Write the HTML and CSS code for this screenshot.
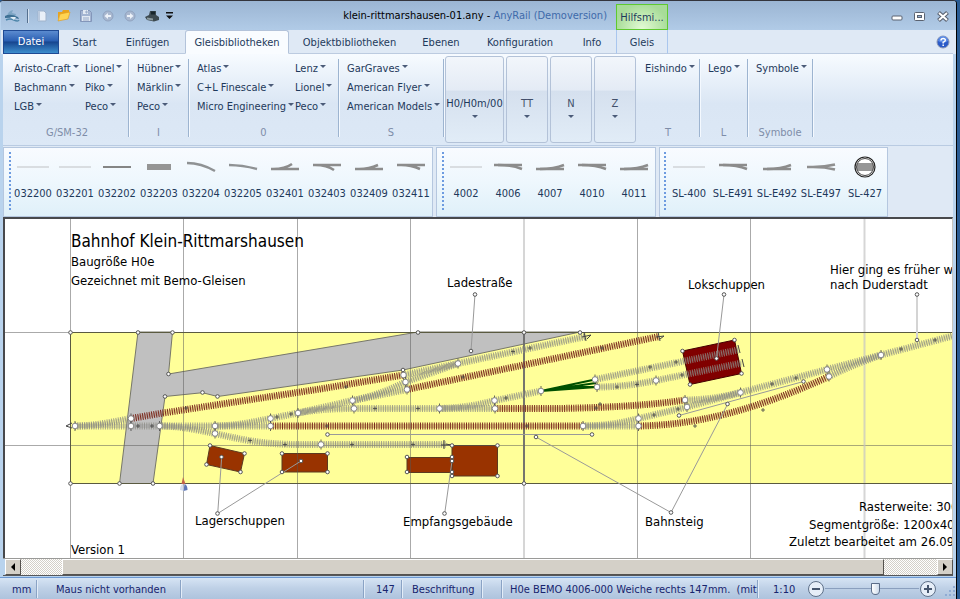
FILE: index.html
```html
<!DOCTYPE html>
<html lang="de">
<head>
<meta charset="utf-8">
<title>klein-rittmarshausen-01.any - AnyRail</title>
<link rel="stylesheet" href="styles.css">
</head>
<body>
<div class="window">
  <header class="head">
    <div class="caption">
      <svg class="logo" width="16" height="16" viewBox="0 0 16 16"><path d="M3 8Q4 3 9 2l-1 3 4 1-1 3z" fill="#7fa6c4"/><path d="M1 8q5-3 13 1l1 2q-6-2-14-1z" fill="#3f7195"/><path d="M2 12q4-2 8 0t5 0" fill="none" stroke="#4e86aa" stroke-width="1.5"/><path d="M6 9h6l-2 3z" fill="#e3eef5"/></svg>
      <span class="qsep"></span>
      <button class="q" aria-label="Neu"><svg width="16" height="16" viewBox="0 0 16 16"><path d="M4 3h6l2 2v8H4z" fill="#e9f0f8" stroke="#9fb3cc"/><path d="M4 3h2v10H4z" fill="#b9c9de"/></svg></button>
      <button class="q" aria-label="Öffnen"><svg width="16" height="16" viewBox="0 0 16 16"><path d="M2 4h4l1-2h6v4H4l-2 6z" fill="#e8a41d"/><path d="M2 13 4 6l10-2-2 7z" fill="#ffd452" stroke="#e0981a" stroke-width=".6"/></svg></button>
      <button class="q" aria-label="Speichern"><svg width="16" height="16" viewBox="0 0 16 16"><path d="M2.500 2.500h9l2 2v9h-11z" fill="#a3b4d2" stroke="#8396ba"/><path d="M5 2h5v4H5zM4 8h8v5H4z" fill="#e2e9f3"/><path d="M8 3h1v2H8zM5 10h6M5 12h6" stroke="#97a9c8" fill="none"/></svg></button>
      <button class="q" aria-label="Rückgängig"><svg width="16" height="16" viewBox="0 0 16 16"><circle cx="8" cy="8" r="5" fill="#a9b8d0" stroke="#90a3c0"/><path d="M4.500 8 8 5v2h3v2H8v2z" fill="#edf2f9"/></svg></button>
      <button class="q" aria-label="Wiederholen"><svg width="16" height="16" viewBox="0 0 16 16"><circle cx="8" cy="8" r="5" fill="#a9b8d0" stroke="#90a3c0"/><path d="M11.500 8 8 5v2H5v2h3v2z" fill="#edf2f9"/></svg></button>
      <button class="q" aria-label="Drucken"><svg width="16" height="16" viewBox="0 0 16 16"><path d="M1 9l4-2 1-4 6 0 0 4 3 2v3l-5 1.500-7-1.500z" fill="#3d4a50"/><path d="M7 3.500h4v3H7z" fill="#18262c"/><path d="M3 9.500l6 1v2l-6-1z" fill="#8c9ba0"/></svg></button>
      <button class="q more" aria-label="Anpassen"><svg width="9" height="8" viewBox="0 0 9 8"><path d="M1 0h7v1.500H1zM1 3.500h7L4.500 7z" fill="#111"/></svg></button>
      <h1 class="title">klein-rittmarshausen-01.any - <span>AnyRail (Demoversion)</span></h1>
    </div>
    <div class="context">Hilfsmi...</div>
    <div class="winbtns">
      <button aria-label="Minimieren"><svg width="14" height="14" viewBox="0 0 14 14"><rect x="2" y="7" width="10" height="4" rx="1" fill="#fff" stroke="#5a6270"/></svg></button>
      <button aria-label="Maximieren"><svg width="14" height="14" viewBox="0 0 14 14"><rect x="1.500" y="3.500" width="10" height="8" rx="1" fill="#fff" stroke="#5a6270"/><rect x="4.500" y="6.500" width="4" height="2" fill="#9bb5d6" stroke="#5a6270"/></svg></button>
      <button aria-label="Schließen"><svg width="14" height="14" viewBox="0 0 14 14"><path d="M2.500 3.500l9 8M11.500 3.500l-9 8" stroke="#5a6270" stroke-width="4.200"/><path d="M3 4l8 7M11 4l-8 7" stroke="#fff" stroke-width="2"/></svg></button>
    </div>
    <nav class="tabs">
      <button class="file">Datei</button>
      <button>Start</button>
      <button>Einfügen</button>
      <button class="active">Gleisbibliotheken</button>
      <button>Objektbibliotheken</button>
      <button>Ebenen</button>
      <button>Konfiguration</button>
      <button>Info</button>
    </nav>
    <button class="ctab">Gleis</button>
    <div class="helpcell"><button aria-label="Hilfe"><svg width="14" height="14" viewBox="0 0 14 14"><circle cx="7" cy="7" r="6" fill="#2b5bc8" stroke="#8b97b4"/><path d="M2 6a5 5 0 0 1 10 0q-5 3-10 0" fill="#6e9cf0" opacity=".7"/><path d="M5 5.500q0-2 2.200-2T9.300 5.300Q9.300 6.600 7.200 7.200v1.300M7.200 9.500v1.500" fill="none" stroke="#fff" stroke-width="1.500"/></svg></button></div>
  </header>

  <section class="ribbon">
    <div class="group g1"><div class="cols"><div><button>Aristo-Craft</button><button>Bachmann</button><button>LGB</button></div><div><button>Lionel</button><button>Piko</button><button>Peco</button></div></div><h2>G/SM-32</h2></div>
    <div class="group g2"><div class="cols"><div><button>Hübner</button><button>Märklin</button><button>Peco</button></div></div><h2>I</h2></div>
    <div class="group g3"><div class="cols"><div><button>Atlas</button><button>C+L Finescale</button><button>Micro Engineering</button></div><div><button>Lenz</button><button>Lionel</button><button>Peco</button></div></div><h2>0</h2></div>
    <div class="group g4"><div class="cols"><div><button>GarGraves</button><button>American Flyer</button><button>American Models</button></div></div><h2>S</h2></div>
    <div class="bigs"><button class="wide">H0/H0m/00</button><button>TT</button><button>N</button><button>Z</button></div>
    <div class="group g5"><div class="cols"><div><button>Eishindo</button></div></div><h2>T</h2></div>
    <div class="group g6"><div class="cols"><div><button>Lego</button></div></div><h2>L</h2></div>
    <div class="group g7"><div class="cols"><div><button>Symbole</button></div></div><h2>Symbole</h2></div>
  </section>

  <svg class="defs" width="0" height="0">
    <defs>
      <g id="st"><path d="M4 12h32" stroke="#d9dde1" stroke-width="2"/></g>
      <g id="tr" fill="none" stroke="#8c8c8c" stroke-width="2.500"><path d="M6 10h28"/><path d="M10 10q14 0 24 4"/></g>
      <g id="tl" fill="none" stroke="#8c8c8c" stroke-width="2.500"><path d="M6 14h28"/><path d="M10 14q14 0 24-4"/></g>
    </defs>
  </svg>
  <section class="bars">
    <div class="bar"><i class="grip"></i>
      <button><svg><use href="#st"/></svg>032200</button>
      <button><svg><use href="#st"/></svg>032201</button>
      <button><svg><path d="M6 12h28" stroke="#858585" stroke-width="2"/></svg>032202</button>
      <button><svg><path d="M8 12h24" stroke="#959595" stroke-width="6"/></svg>032203</button>
      <button><svg><path d="M6 8q14 0 28 8" fill="none" stroke="#8f9294" stroke-width="2.500"/></svg>032204</button>
      <button><svg><path d="M6 10q14 0 28 4" fill="none" stroke="#8f9294" stroke-width="2.500"/></svg>032205</button>
      <button><svg><path d="M6 14h28M8 14q12 0 19-5" fill="none" stroke="#8c8c8c" stroke-width="2.500"/></svg>032401</button>
      <button><svg><path d="M6 10h28M8 10q12 0 19 5" fill="none" stroke="#8c8c8c" stroke-width="2.500"/></svg>032403</button>
      <button><svg><path d="M6 14h28M10 14q10 0 19-4" fill="none" stroke="#8c8c8c" stroke-width="2.500"/></svg>032409</button>
      <button><svg><path d="M6 10h28M10 10q10 0 19 4" fill="none" stroke="#8c8c8c" stroke-width="2.500"/></svg>032411</button>
    </div>
    <div class="bar"><i class="grip"></i>
      <button><svg><use href="#st"/></svg>4002</button>
      <button><svg><use href="#tr"/></svg>4006</button>
      <button><svg><use href="#tl"/></svg>4007</button>
      <button><svg><use href="#tr"/></svg>4010</button>
      <button><svg><use href="#tl"/></svg>4011</button>
    </div>
    <div class="bar roomy"><i class="grip"></i>
      <button><svg><use href="#st"/></svg>SL-400</button>
      <button><svg><use href="#tr"/></svg>SL-E491</button>
      <button><svg><use href="#tl"/></svg>SL-E492</button>
      <button><svg><path d="M6 12h14M12 12q12 0 22-2.500M12 12q12 0 22 2.500" fill="none" stroke="#8f8f8f" stroke-width="2.500"/></svg>SL-E497</button>
      <button><svg><circle cx="20" cy="12" r="10" fill="#fff" stroke="#222" stroke-width="1.200"/><path d="M12 12h16" stroke="#969696" stroke-width="8"/><circle cx="20" cy="12" r="8.500" fill="none" stroke="#444"/></svg>SL-427</button>
    </div>
  </section>

  <main class="plan">
    <svg width="100%" height="100%" role="img" aria-label="Gleisplan Bahnhof Klein-Rittmarshausen">
      <g transform="translate(-5 -219)">
        <rect x="70" y="332" width="2000" height="151" fill="#ffff99"/>
        <path class="road" d="M138 332H172.500L168.500 374 418 332H580L403 370 217.700 396.500 202.500 392.700 165 396.500 153 483.500H119.500Z"/>
        <path class="house" d="M210 445.500 244.500 453.500 240.500 472 206.500 464.500ZM282 453.500H327.500V472H282ZM407 457.500H452V472.500H407ZM452 445.500H497.500V476H452Z"/>
        <path class="shed" d="M682.500 351 734.500 340 741.500 373.500 690 384.500Z"/>
        <path class="grid" d="M70.500 219V560M183.500 219V560M297.500 219V560M410.500 219V560M637.500 219V560M750.500 219V560M5 332.500H2000M5 445.500H2000"/>
        <path class="gridw" d="M524 219V560M864.500 219V560"/>
        <path class="edge" d="M70.500 332.500H2000M70.500 483.500H2000M70.500 332V483"/>
        <path d="M524 332V483" stroke="#555" stroke-width="1.500"/>

        <g id="tracks"></g>
        <g class="green"><path d="M541 391 595 379.500M541 391 597 387M560 387 597 387M541 391 596 383"/></g>

        <path class="call" d="M475 294 471 351M724 294.500 716.500 358.500M217.700 513.500 221.700 457M217.700 513.500 301 461M444.700 513.500 452 461M671 512.500 536 437M671 512.500 727.700 404M327.500 434.500H592M679 415.500 803.500 381.500"/>
        <path d="M917 294V340" stroke="#d4d4d4" stroke-width="2"/>
        <path d="M72 423l-6 3 6 2M584 332l2 9M582 337l9-2-4 4M658 332l2 9M656 337l8-1-4 3M738 345l2 8M742 359l2 8M444 440v9M441 445h10l-5-1" class="buffer"/>
        <g id="nodes"></g>
        <path d="M183 477l-1.500 7h4z" fill="#c2644a"/><path d="M180 490q0-5 3-6l1 7z" fill="#d5dcec"/><path d="M187.500 490q0-5-3-6l-1 7z" fill="#5f78b8"/>

        <g class="txt">
          <text class="big" x="71" y="247">Bahnhof Klein-Rittmarshausen</text>
          <text x="71" y="266">Baugröße H0e</text>
          <text x="71" y="285">Gezeichnet mit Bemo-Gleisen</text>
          <text x="447" y="287">Ladestraße</text>
          <text x="688" y="289">Lokschuppen</text>
          <text x="830" y="274">Hier ging es früher we</text>
          <text x="830" y="289">nach Duderstadt</text>
          <text x="195" y="525">Lagerschuppen</text>
          <text x="403" y="526">Empfangsgebäude</text>
          <text x="645" y="526">Bahnsteig</text>
          <text x="71" y="554">Version 1</text>
          <text x="859" y="511">Rasterweite: 300</text>
          <text x="809" y="529">Segmentgröße: 1200x400</text>
          <text x="789" y="546">Zuletzt bearbeitet am 26.09.2</text>
        </g>
      </g>
    </svg>
  </main>
  <div class="scroll"><button aria-label="Links"><svg width="8" height="8"><path d="M6 0v8L2 4z"/></svg></button><div class="track"><div class="thumb"></div></div><button aria-label="Rechts"><svg width="8" height="8"><path d="M2 0v8l4-4z"/></svg></button></div>

  <footer class="status">
    <span class="s-unit">mm</span>
    <span class="s-mouse">Maus nicht vorhanden</span>
    <span class="s-fill"></span>
    <span class="s-num">147</span>
    <span class="s-kind">Beschriftung</span>
    <span class="s-gap"></span>
    <span class="s-desc">H0e BEMO 4006-000 Weiche rechts 147mm.&nbsp; (mit A</span>
    <label class="s-zoom" for="zoom">1:10</label>
    <button aria-label="Verkleinern"><svg width="18" height="18"><circle cx="9" cy="9" r="7.500"/><path d="M5 9h8"/></svg></button>
    <input id="zoom" type="range" min="0" max="100" value="54">
    <button aria-label="Vergrößern"><svg width="18" height="18"><circle cx="9" cy="9" r="7.500"/><path d="M5 9h8M9 5v8"/></svg></button>
    <svg class="sizer" width="12" height="12"><path d="M9 1h2v2H9zM5 5h2v2H5zM9 5h2v2H9zM1 9h2v2H1zM5 9h2v2H5zM9 9h2v2H9z"/></svg>
  </footer>
</div>
<script src="plan.js"></script>
</body>
</html>
```
FILE: plan.js
```js
const NS = 'http://www.w3.org/2000/svg';

const flex = [
  'M131 418.500L160 413.500L320 389L403.500 375',
  'M407 389.500L659 336.500',
  'M495 408.500H560Q640 407 685 400',
  'M270.500 426H583',
  'M638.500 426C700 425 760 408 829 376.500'
];
const plain = [
  'M75 426H270.500',
  'M75 426C95 426 112 422 131 418.500',
  'M159.500 426C180 426 198 430 215 433.500C240 439 260 444.500 300 444.500H446',
  'M215 426C235 426 253 422 270.500 418.500L298 413L352.500 400.500',
  'M298 413Q320 408.500 354 408.500H495',
  'M352.500 400.500Q380 395 405.500 382L458 363.500',
  'M352.500 400.500L407 389.500',
  'M403.500 375L458 363.500L586 336.500',
  'M439.500 408.500Q468 408 495 400.500L541 391',
  'M595 379.500L738 350',
  'M597 387Q625 387 656 380.500L742 363',
  'M583 426H638.500',
  'M583 426Q611 426 638.500 418.500L687 407L740.500 392.500',
  'M685 400Q712 400 740.500 392.500L827 369.500L881 355L960 334',
  'M829 376.500Q850 366 881 355'
];
const joints = [
  [75, 426], [131, 418.5], [131, 426], [159.5, 426], [215, 426], [215, 433.5], [270.5, 418.5], [270.5, 426],
  [298, 413], [352.5, 400.5], [354, 408.5], [403.5, 375], [405.5, 382], [407, 389.5], [458, 363.5], [439.5, 408.5],
  [494.5, 400.5], [495, 408.5], [541, 391], [595, 379.5], [597, 387], [583, 426], [638.5, 418.5], [638.5, 426],
  [656, 380.5], [685, 400], [687, 407], [740.5, 392.5], [827, 369.5], [829, 376.5], [881, 355], [321, 444.5]
];
const handles = [
  [70.5, 332.5], [138, 332.5], [172.5, 332.5], [168.5, 374], [165, 396.5], [202.5, 392.5], [217.5, 396.5],
  [70.5, 483.5], [119.5, 483.5], [153, 483.5], [418, 332.5], [580, 332.5], [403, 370], [524, 332.5], [524, 483.5],
  [210, 445.5], [244.5, 453.5], [240.5, 472], [206.5, 464.5], [282, 453.5], [327.5, 453.5], [282, 472], [327.5, 472],
  [407, 457], [407, 472], [452, 445.5], [452, 457], [452, 461], [452, 472], [452, 476], [497.5, 445.5], [497.5, 476],
  [682.5, 351], [734.5, 340], [741.5, 373.5], [690, 384.5], [475, 294.5], [471, 351], [724, 294.5], [716.5, 358.5],
  [917, 294.5], [917, 340], [217.5, 513.5], [221.5, 457], [301, 461], [444.5, 513.5], [671, 512.5], [536, 437],
  [727.5, 404], [327.5, 434.5], [592, 434.5], [679, 415.5], [803.5, 381.5]
];
const marks = [
  [138, 426], [152, 426], [186, 408], [250, 440.5], [285, 444.5], [277, 417], [291, 414], [346, 387], [375, 408.5],
  [418, 408.5], [352, 444.5], [413, 444.5], [463, 377], [513, 351.5], [530, 348], [506, 398], [602, 348], [527, 426],
  [327, 426], [617, 387], [637, 384.5], [650, 367], [676, 362], [682, 375], [654, 415], [678, 409], [596, 408],
  [600, 404], [772, 384], [796, 378], [901, 349], [935, 340], [763, 410], [695, 426]
];

function add(parent, tag, attrs) {
  const el = document.createElementNS(NS, tag);
  for (const k in attrs) el.setAttribute(k, attrs[k]);
  parent.appendChild(el);
}
const tracks = document.getElementById('tracks');
const nodes = document.getElementById('nodes');

for (const [list, name] of [[plain, 'plain'], [flex, 'flex']]) {
  for (const d of list) {
    add(tracks, 'path', { d, class: 'ties ' + name });
    add(tracks, 'path', { d, class: 'rails ' + name });
  }
}
for (const [x, y] of marks) add(nodes, 'path', { d: `M${x - 2} ${y}h4M${x} ${y - 2}v4`, class: 'mark' });
for (const [x, y] of joints) {
  add(nodes, 'path', { d: `M${x} ${y - 5}v10`, class: 'mark' });
  add(nodes, 'circle', { cx: x, cy: y, r: 2.8, class: 'joint' });
}
for (const [x, y] of handles) add(nodes, 'circle', { cx: x, cy: y, r: 1.8, class: 'handle' });
```
FILE: styles.css
```css
*, ::after { box-sizing: border-box; }
html, body { height: 100%; }
body {
  margin: 0;
  background: #2a5c94;
  font: 11px/14px "DejaVu Sans Condensed", "DejaVu Sans", sans-serif;
  color: #1e395b;
  overflow: hidden;
}
button {
  font: inherit; color: inherit; background: none; border: 0; padding: 0; margin: 0;
  white-space: nowrap;
}
.window {
  display: flex; flex-direction: column;
  height: 100%;
  margin-right: 3px;
  border-top: 1px solid #33343c;
  border-right: 1px solid #000;
  background: #b9d3ed;
  border-radius: 4px 4px 0 0;
  overflow: hidden;
}
.head {
  display: grid;
  grid-template: 29px 24px / auto 52px 1fr;
  background: linear-gradient(#9bb5d3, #b1cbe7 29px, #dfe9f5 29px);
  border-left: 1px solid #b9d3ed;
}
.caption { display: flex; align-items: center; padding-left: 3px; min-width: 0; }
.logo { margin-right: 7px; }
.qsep { width: 2px; height: 14px; border-left: 1px solid #55708f; border-right: 1px solid #d5e2f1; margin-right: 2px; }
.q { width: 22px; height: 22px; display: grid; place-items: center; }
.q.more { width: 12px; }
.title {
  flex: 1; margin: 0; padding-right: 9px; text-align: right;
  font-size: 11px; font-weight: normal; color: #000; white-space: nowrap;
}
.title span { color: #3e6aaa; }
.context {
  margin-top: 3px; border: 1px solid #5fc92f; line-height: 26px; text-align: center;
  background: radial-gradient(ellipse at 50% 100%, #e4fbd5, #a7dc98 75%);
}
.winbtns { display: flex; justify-content: flex-end; align-items: center; gap: 9px; padding-right: 6px; }
.winbtns button, .helpcell button { width: 14px; height: 14px; }
.winbtns svg, .helpcell svg { display: block; }
.tabs {
  display: grid; padding-left: 2px;
  grid-template-columns: 56px 51px 75px 104px 121px 62px 96px 48px;
}
.tabs button { border-bottom: 1px solid #bccbe0; padding-top: 2px; }
.tabs .file {
  color: #fff; border: 1px solid #1f4a94; padding-top: 0;
  background: linear-gradient(#5b8bd0, #2a5fb2 45%, #17458f 50%, #3d8fce);
}
.tabs .active {
  background: #f9fcff; border: 1px solid #b3c3da; border-bottom-color: #f9fcff;
  border-radius: 3px 3px 0 0; padding-top: 1px;
}
.ctab { border: 1px solid #a9c6ee; border-top: 0; border-bottom-color: #bccbe0; padding-top: 2px; }
.helpcell { display: flex; justify-content: flex-end; align-items: center; padding-right: 3px; border-bottom: 1px solid #bccbe0; margin-right: 3px; }

.ribbon {
  display: flex; height: 91px; margin: 0 3px; padding-top: 2px;
  background: linear-gradient(#f7fbff, #dae6f4 55%, #dce8f6);
}
.group {
  display: flex; flex-direction: column; justify-content: space-between;
  border-right: 1px solid #9db4d0; box-shadow: 1px 0 #f4f9ff;
  margin: 3px 0 8px; padding: 0 0 0 8px;
}
.cols { display: grid; grid-auto-flow: column; justify-content: start; }
.cols button { display: block; height: 19px; text-align: left; }
.cols button::after, .bigs button::after {
  content: ""; display: inline-block; width: 6px; margin-left: 2px; vertical-align: 4px;
  border: 3px solid transparent; border-top-color: #4b5b78; border-bottom: 0;
}
.group h2 { margin: 0 8px 0 0; font-size: 11px; line-height: 8px; font-weight: normal; color: #7e8da8; text-align: center; }
.g1 { width: 126px; padding-left: 11px; }
.g1 .cols { grid-template-columns: 71px auto; }
.g2 { width: 60px; }
.g3 { width: 150px; }
.g3 .cols { grid-template-columns: 98px auto; }
.g4 { width: 105px; }
.g5 { width: 64px; }
.g6 { width: 48px; }
.g7 { width: 65px; }
.bigs { display: flex; gap: 2px; padding: 0 0 2px 1px; }
.bigs button {
  width: 42px; padding-top: 15px; border: 1px solid #b3c2d8; border-radius: 3px; color: #42506a;
  background: linear-gradient(#f2f6fb, #e4ebf5 39%, #d5e0ee 40%, #e1ecf7);
}
.bigs .wide { width: 59px; color: #1e395b; }
.bigs button::after { display: block; margin: 4px auto 0; }
.bigs + .group { padding-left: 9px; }

.defs { position: absolute; }
.bars {
  display: flex; gap: 3px; margin: 0 3px; padding-top: 1px;
  background: #dfe9f5; border-top: 1px solid #b9cbe2;
}
.bar {
  display: flex; height: 70px; padding: 4px 0 0 5px;
  border: 1px solid #b5c7df; background: linear-gradient(#f8fbff, #eef7fd 50%, #dff0f9);
}
.grip { width: 2px; height: 59px; margin-right: 1px; background: repeating-linear-gradient(#6d9be0 0 2px, transparent 2px 4px); }
.bar button { width: 42px; display: flex; flex-direction: column; align-items: center; }
.bar button svg { width: 40px; height: 24px; margin: 3px 0 8px; }
.bar.roomy { padding-left: 4px; }
.roomy button { width: 44px; }

.plan {
  flex: 1; min-height: 0; margin: 0 3px; background: #fff;
  border-top: 2px solid #48494c; border-left: 2px solid #48494c; border-right: 1px solid #c8c5be;
}
.plan svg { display: block; }
.grid { fill: none; stroke: #555; stroke-opacity: .5; }
.gridw { stroke: #c4c4c4; stroke-opacity: .7; stroke-width: 2; }
.edge { fill: none; stroke: #5a5a40; }
.road { fill: #c0c0c0; stroke: #77776a; }
.house { fill: #993300; stroke: #5b3a20; }
.shed { fill: #800000; stroke: #400; }
.ties { fill: none; stroke-width: 7; stroke-dasharray: 1 1.3; }
.ties.plain { stroke: #8f8f86; stroke-opacity: .8; }
.ties.flex { stroke: #7c2a20; }
.rails { fill: none; stroke-width: 4; stroke-opacity: .22; }
.rails.plain { stroke: #808080; }
.rails.flex { stroke: #803020; }
.green { fill: none; stroke: #005000; stroke-width: 2; }
.call { fill: none; stroke: #999; }
.buffer { fill: none; stroke: #444; }
.mark { stroke: #444; fill: none; stroke-opacity: .8; }
.joint { fill: #fff; stroke: #888; }
.handle { fill: #fff; stroke: #555; }
.txt { font-size: 13px; fill: #000; }
.txt .big { font-size: 17px; }

.scroll { display: flex; height: 18px; margin: 0 3px; padding-left: 2px; border-top: 1px solid #9a9a98; border-bottom: 1px solid #55565a; }
.scroll button, .thumb {
  background: #d4d0c8; border: 1px solid; border-color: #fff #55524e #55524e #fff;
}
.scroll button { width: 16px; display: grid; place-items: center; }
.track { flex: 1; background: repeating-conic-gradient(#fff 0 25%, #d4d0c8 0 50%) 0 0 / 2px 2px; }
.thumb { margin-left: 4.5%; width: 89.7%; height: 100%; }

.status {
  display: flex; align-items: center; height: 22px; margin-top: 1px;
  border-top: 1px solid #6c98d2; color: #17246e;
  background: linear-gradient(#d6e4f4, #bed0e6 50%, #aec3dd);
}
.status span { height: 18px; line-height: 20px; border-right: 1px solid #8aa3c5; box-shadow: 1px 0 #e3edf8; overflow: hidden; white-space: nowrap; }
.s-unit { width: 37px; padding-left: 12px; }
.s-mouse { width: 144px; padding-left: 19px; }
.s-fill { flex: 1; }
.s-num { width: 38px; padding-left: 12px; }
.s-kind { width: 80px; padding-left: 10px; }
.s-gap { width: 20px; }
.status .s-desc { width: 256px; padding-left: 8px; }
.s-zoom { width: 49px; padding: 2px 0 0 15px; }
.status button, .status button svg { width: 18px; height: 18px; display: block; }
.status circle { fill: #e6eef8; stroke: #5f7189; }
.status button path { stroke: #46566e; stroke-width: 2; }
.status input { appearance: none; width: 94px; height: 14px; margin: 0; background: linear-gradient(#8a9fbe, #8a9fbe) center / 100% 1px no-repeat; }
.status input::-webkit-slider-thumb {
  appearance: none; width: 9px; height: 12px; background: linear-gradient(90deg, #fff, #cfdcec);
  border: 1px solid #5b6c88; border-radius: 1px 1px 5px 5px;
}
.sizer { margin: 4px 0 0 7px; fill: #8fabd4; }
```
